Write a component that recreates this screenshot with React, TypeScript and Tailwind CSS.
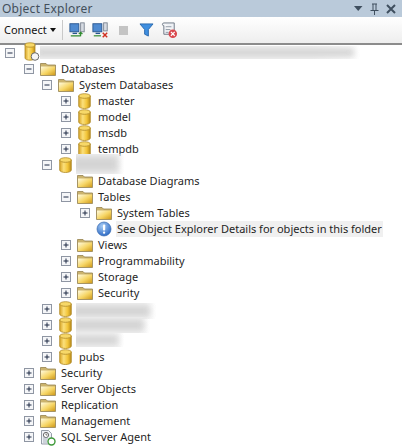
import React from 'react';

const font = "font-['Noto_Sans','Open_Sans',sans-serif]";

type Kind = 'server' | 'folder' | 'db' | 'info' | 'agent';

interface Row {
  level: 0 | 1 | 2 | 3 | 4;
  label?: string;
  kind: Kind;
  toggle?: '+' | '-';
  blur?: string;
}

const rows: Row[] = [
  { level: 0, kind: 'server', toggle: '-', blur: 'left-[40px] top-[1px] w-[320px] h-[13px]' },
  { level: 1, kind: 'folder', toggle: '-', label: 'Databases' },
  { level: 2, kind: 'folder', toggle: '-', label: 'System Databases' },
  { level: 3, kind: 'db', toggle: '+', label: 'master' },
  { level: 3, kind: 'db', toggle: '+', label: 'model' },
  { level: 3, kind: 'db', toggle: '+', label: 'msdb' },
  { level: 3, kind: 'db', toggle: '+', label: 'tempdb' },
  { level: 2, kind: 'db', toggle: '-', blur: 'left-[76px] top-[-3px] w-[48px] h-[20px]' },
  { level: 3, kind: 'folder', label: 'Database Diagrams' },
  { level: 3, kind: 'folder', toggle: '-', label: 'Tables' },
  { level: 4, kind: 'folder', toggle: '+', label: 'System Tables' },
  { level: 4, kind: 'info', label: 'See Object Explorer Details for objects in this folder' },
  { level: 3, kind: 'folder', toggle: '+', label: 'Views' },
  { level: 3, kind: 'folder', toggle: '+', label: 'Programmability' },
  { level: 3, kind: 'folder', toggle: '+', label: 'Storage' },
  { level: 3, kind: 'folder', toggle: '+', label: 'Security' },
  { level: 2, kind: 'db', toggle: '+', blur: 'left-[76px] top-[2px] w-[80px] h-[16px]' },
  { level: 2, kind: 'db', toggle: '+', blur: 'left-[76px] top-[0px] w-[74px] h-[16px]' },
  { level: 2, kind: 'db', toggle: '+', blur: 'left-[76px] top-[0px] w-[48px] h-[14px]' },
  { level: 2, kind: 'db', toggle: '+', label: 'pubs' },
  { level: 1, kind: 'folder', toggle: '+', label: 'Security' },
  { level: 1, kind: 'folder', toggle: '+', label: 'Server Objects' },
  { level: 1, kind: 'folder', toggle: '+', label: 'Replication' },
  { level: 1, kind: 'folder', toggle: '+', label: 'Management' },
  { level: 1, kind: 'agent', toggle: '+', label: 'SQL Server Agent' },
];

const indent = ['pl-[5px]', 'pl-[24px]', 'pl-[42px]', 'pl-[61px]', 'pl-[80px]'];

const Cylinder = () => (
  <svg width="13" height="16" viewBox="0 0 13 16" className="shrink-0">
    <defs>
      <linearGradient id="dbg" x1="0" x2="1" y1="0" y2="0">
        <stop offset="0" stopColor="#d9a526" />
        <stop offset="0.35" stopColor="#fbe07c" />
        <stop offset="0.7" stopColor="#f2c437" />
        <stop offset="1" stopColor="#b98a18" />
      </linearGradient>
    </defs>
    <path d="M0.7 3v10c0 1.4 2.6 2.5 5.8 2.5s5.8-1.1 5.8-2.5V3z" fill="url(#dbg)" stroke="#b08a2a" strokeWidth="0.8" />
    <ellipse cx="6.5" cy="3" rx="5.8" ry="2.3" fill="#f7d868" stroke="#b08a2a" strokeWidth="0.8" />
  </svg>
);

const Folder = () => (
  <svg width="16" height="14" viewBox="0 0 16 14" className="shrink-0">
    <defs>
      <linearGradient id="fg" x1="0" x2="1" y1="0" y2="1">
        <stop offset="0" stopColor="#fffbe0" />
        <stop offset="0.55" stopColor="#f6d564" />
        <stop offset="1" stopColor="#cf9a1c" />
      </linearGradient>
    </defs>
    <path d="M0.5 3V1.5h5.5l1.5 1.5H15.5V13.5H0.5z" fill="#cbb36d" stroke="#96834f" strokeWidth="0.8" />
    <path d="M1 4.5h14V13H1z" fill="url(#fg)" />
  </svg>
);

const Info = () => (
  <svg width="16" height="16" viewBox="0 0 16 16" className="shrink-0">
    <defs>
      <radialGradient id="ig" cx="0.4" cy="0.3" r="0.8">
        <stop offset="0" stopColor="#a8cdf5" />
        <stop offset="1" stopColor="#1f5fc0" />
      </radialGradient>
    </defs>
    <circle cx="8" cy="8" r="7" fill="url(#ig)" stroke="#3a6cb0" strokeWidth="0.7" />
    <rect x="7" y="3.5" width="2.2" height="6" rx="0.8" fill="#fff" />
    <rect x="7" y="10.5" width="2.2" height="2.2" rx="1" fill="#fff" />
  </svg>
);

const Server = () => (
  <div className="relative h-[16px] w-[16px] shrink-0">
    <svg width="16" height="20" viewBox="0 0 16 20" className="absolute top-[-3px] left-[3px]">
      <path d="M1 3v13c0 1.2 2 2.2 5 2.2s5-1 5-2.2V3z" fill="url(#dbg)" stroke="#b08a2a" strokeWidth="0.8" />
      <ellipse cx="6" cy="3" rx="5" ry="2.2" fill="#f7d868" stroke="#b08a2a" strokeWidth="0.8" />
      <circle cx="11" cy="14.5" r="3.8" fill="#f6f6f6" stroke="#6a6a6a" strokeWidth="1" />
    </svg>
  </div>
);

const Agent = () => (
  <svg width="16" height="17" viewBox="0 0 16 17" className="shrink-0">
    <path d="M1.5 1.5h7l3 3V15h-10z" fill="#eef1f6" stroke="#7d8794" strokeWidth="0.8" />
    <circle cx="6" cy="6" r="2.6" fill="#fff" stroke="#444" strokeWidth="0.8" />
    <path d="M6 4.5V6h1.4" fill="none" stroke="#444" strokeWidth="0.7" />
    <path d="M3 9h5M3 11h4M3 13h4" stroke="#9aa4b2" strokeWidth="0.8" />
    <circle cx="11.5" cy="12.5" r="3.5" fill="#fff" stroke="#3f9a3a" strokeWidth="1.4" />
  </svg>
);

const Toggle = ({ sign }: { sign?: '+' | '-' }) => (
  <span className="flex h-[10px] w-[10px] shrink-0 items-center justify-center">
    {sign && (
      <svg width="10" height="10" viewBox="0 0 10 10">
        <rect x="0.5" y="0.5" width="9" height="9" fill="#f5f6f8" stroke="#8f96a3" />
        <path d="M2.5 5h5" stroke="#1f2a44" />
        {sign === '+' && <path d="M5 2.5v5" stroke="#1f2a44" />}
      </svg>
    )}
  </span>
);

const icons: Record<Kind, React.ReactNode> = {
  server: <Server />,
  folder: <Folder />,
  db: <Cylinder />,
  info: <Info />,
  agent: <Agent />,
};

const TreeRow = ({ row }: { row: Row }) => (
  <div className={`relative flex h-[16px] items-center ${indent[row.level]}`}>
    <Toggle sign={row.toggle} />
    <span className="ml-[4px] flex w-[19px] shrink-0 items-center justify-center">{icons[row.kind]}</span>
    {row.label && (
      <span
        className={`ml-[3px] px-[1px] leading-[16px] whitespace-nowrap ${
          row.kind === 'info' ? 'bg-[#f0f0f0]' : ''
        }`}
      >
        {row.label}
      </span>
    )}
    {row.blur && (
      <div className={`absolute overflow-hidden bg-gradient-to-r from-[#f4f4f4] from-85% to-transparent ${row.blur}`}>
        <div className="my-[2px] mr-[6px] ml-[-4px] h-[calc(100%-4px)] bg-[#d4d4d4] blur-[3px]" />
      </div>
    )}
  </div>
);

const ToolButton = ({ children }: { children: React.ReactNode }) => (
  <span className="flex h-[20px] w-[23px] items-center justify-center">{children}</span>
);

export default function App() {
  return (
    <div className={`h-[448px] w-[402px] overflow-hidden bg-white text-[11px] text-[#1f1f1f] ${font}`}>
      <div className="flex h-[17px] items-center justify-between bg-[#bacada] pr-[6px] pl-[2px] text-[#434f5b]">
        <span className="text-[12px] tracking-[0.25px]">Object Explorer</span>
        <div className="flex items-center gap-[7px]">
          <svg width="9" height="5" viewBox="0 0 9 5"><path d="M0 0h8.5L4.2 5z" fill="#3f4f5f" /></svg>
          <svg width="9" height="12" viewBox="0 0 9 12">
            <path d="M2 1h5M3 1v6M6 1v6M0.5 7.5h8M4.5 8v4" stroke="#3f4f5f" fill="none" />
          </svg>
          <svg width="10" height="10" viewBox="0 0 10 10"><path d="M1 1l8 8M9 1l-8 8" stroke="#3f4f5f" strokeWidth="2" /></svg>
        </div>
      </div>

      <div className="flex h-[28px] items-center border-b-2 border-[#8c8c8c] bg-gradient-to-b from-white to-[#eeeeee] pl-[4px]">
        <span className="w-[46px] text-[11px] text-[#111]">Connect</span>
        <svg width="6" height="4" viewBox="0 0 6 4"><path d="M0 0h6L3 4z" fill="#111" /></svg>
        <span className="mr-[3px] ml-[6px] h-[20px] w-px bg-[#c9c9c9]" />
        <ToolButton>
          <svg width="17" height="18" viewBox="0 0 19 18">
            <rect x="1" y="2" width="10" height="9" fill="#4f8ad0" stroke="#27558f" />
            <rect x="4" y="12" width="5" height="1.5" fill="#27558f" />
            <rect x="13" y="1" width="4" height="10" fill="#d6dbe2" stroke="#7a8390" />
            <path d="M2 15.5h11M13 16V12M11 13.5l2-2 2 2" stroke="#2f8a2f" strokeWidth="1.3" fill="none" />
          </svg>
        </ToolButton>
        <ToolButton>
          <svg width="17" height="18" viewBox="0 0 19 18">
            <rect x="1" y="2" width="10" height="9" fill="#4f8ad0" stroke="#27558f" />
            <rect x="4" y="12" width="5" height="1.5" fill="#27558f" />
            <rect x="13" y="1" width="4" height="9" fill="#d6dbe2" stroke="#7a8390" />
            <path d="M2 15.5h8" stroke="#2f8a2f" strokeWidth="1.3" />
            <path d="M12 12l5 5M17 12l-5 5" stroke="#d03020" strokeWidth="1.6" />
          </svg>
        </ToolButton>
        <ToolButton>
          <span className="h-[9px] w-[9px] bg-[#c4c4c4]" />
        </ToolButton>
        <ToolButton>
          <svg width="15" height="14" viewBox="0 0 16 15">
            <path d="M1 1h14L10 7v7L6 12V7z" fill="#3f8fe0" stroke="#2a68ad" />
          </svg>
        </ToolButton>
        <ToolButton>
          <svg width="17" height="17" viewBox="0 0 18 18">
            <path d="M3 1h11v8M3 1c-2 0-2 3 0 3v9h7" fill="#eef1f5" stroke="#6d7885" />
            <path d="M5 5h6M5 8h5M5 11h3" stroke="#8d97a3" />
            <circle cx="12.5" cy="12.5" r="4.5" fill="#d9474d" />
            <path d="M10.5 10.5l4 4M14.5 10.5l-4 4" stroke="#fff" strokeWidth="1.3" />
          </svg>
        </ToolButton>
      </div>

      <div>
        {rows.map((row, i) => (
          <TreeRow key={i} row={row} />
        ))}
      </div>
    </div>
  );
}
